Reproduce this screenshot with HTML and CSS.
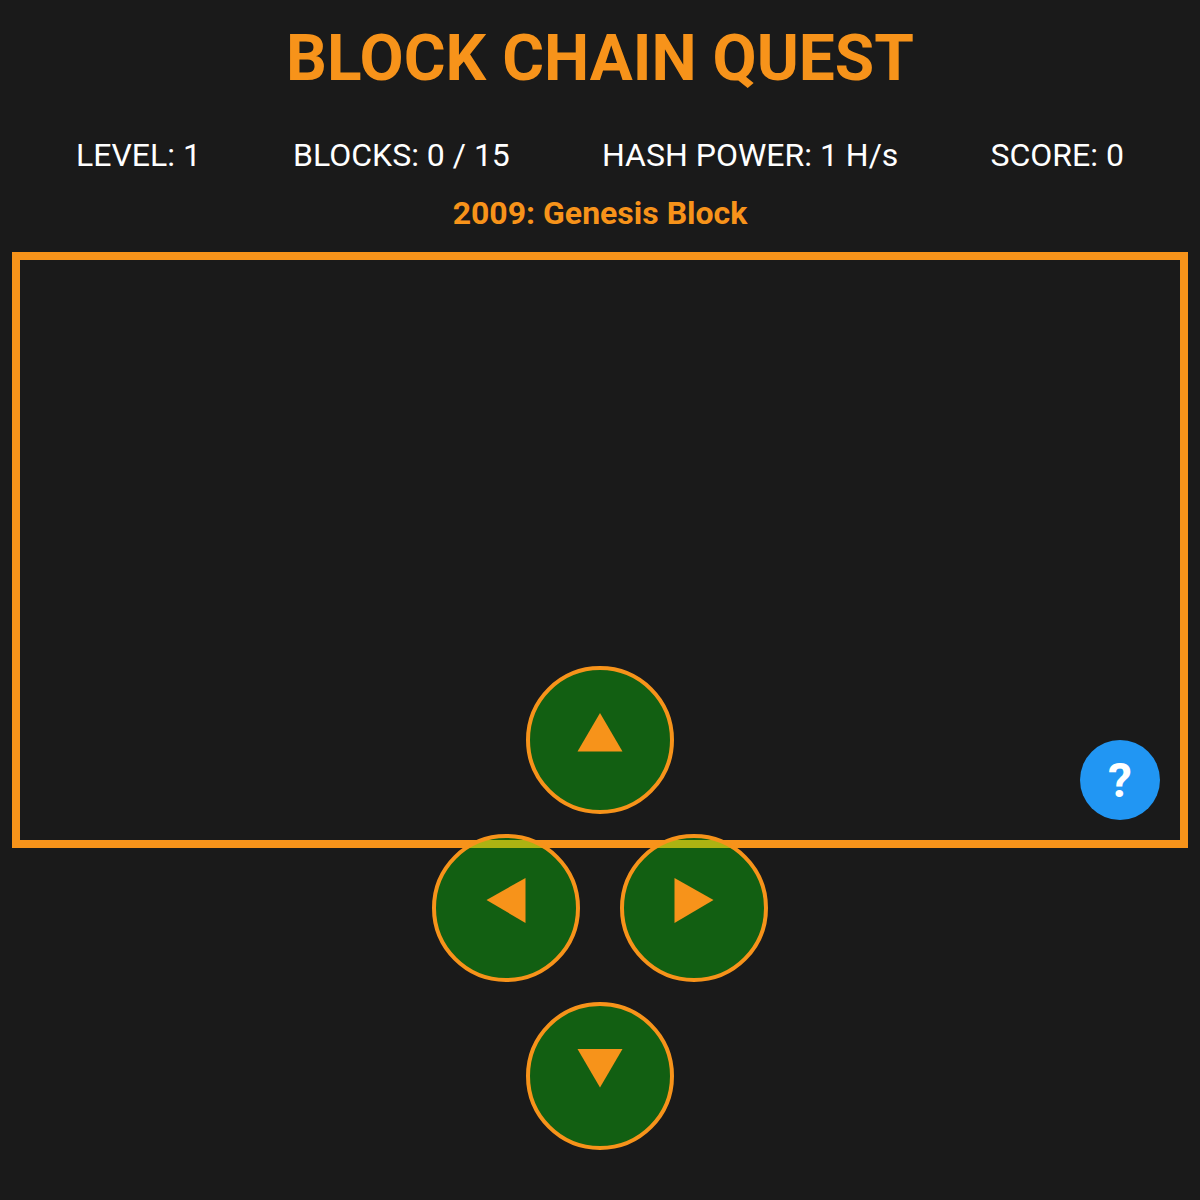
FILE: index.html
```html
<!DOCTYPE html>
<html>
<head>
    <title>Block Chain Quest</title>
    <link rel="stylesheet" href="styles.css">
</head>
<body>
    <h1>BLOCK CHAIN QUEST</h1>

    <div class="stats">
        <div>LEVEL: 1</div>
        <div>BLOCKS: 0 / 15</div>
        <div>HASH POWER: 1 H/s</div>
        <div>SCORE: 0</div>
    </div>

    <div class="era">2009: Genesis Block</div>

    <div class="board"></div>

    <button class="help-btn">?</button>

    <!-- Touch controls sit over the board -->
    <div class="controls">
        <button class="pad-btn">
            <svg class="arrow" viewBox="0 0 148 148"><polygon points="74,47 51.5,85.5 96.5,85.5" /></svg>
        </button>
        <div class="controls-row">
            <button class="pad-btn">
                <svg class="arrow" viewBox="0 0 148 148"><polygon points="54.5,66 93.5,44 93.5,89" /></svg>
            </button>
            <button class="pad-btn">
                <svg class="arrow" viewBox="0 0 148 148"><polygon points="93.5,66 54.5,44 54.5,89" /></svg>
            </button>
        </div>
        <button class="pad-btn">
            <svg class="arrow" viewBox="0 0 148 148"><polygon points="74,85.5 51.5,47 96.5,47" /></svg>
        </button>
    </div>
</body>
</html>
```

FILE: styles.css
```css
* {
    box-sizing: border-box;
}

body {
    font-family: Roboto, sans-serif;
    background: #1a1a1a;
    color: white;
    margin: 0;
    padding: 0 12px;
    height: 1200px;
    overflow: hidden;
}

h1 {
    margin: 0;
    padding-top: 21px;
    height: 127px;
    font-size: 64px;
    line-height: 75px;
    font-weight: 700;
    text-align: center;
    color: #f7931a;
}

.stats {
    display: flex;
    justify-content: space-around;
    padding: 0 18px;
    height: 56px;
    font-size: 32px;
    line-height: 56px;
}

.era {
    height: 69px;
    padding-top: 2px;
    font-size: 32px;
    line-height: 56px;
    font-weight: 700;
    text-align: center;
    color: #f7931a;
}

.board {
    height: 596px;
    border: 8px solid #f7931a;
}

button {
    font-family: inherit;
    padding: 0;
    cursor: pointer;
}

.help-btn {
    position: absolute;
    left: 1080px;
    top: 740px;
    width: 80px;
    height: 80px;
    border: none;
    border-radius: 50%;
    background: #2196f3;
    color: white;
    font-size: 48px;
    font-weight: 700;
}

.controls {
    position: absolute;
    left: 0;
    right: 0;
    top: 666px;
    display: flex;
    flex-direction: column;
    align-items: center;
    gap: 20px;
}

.controls-row {
    display: flex;
    gap: 40px;
}

.pad-btn {
    display: block;
    width: 148px;
    height: 148px;
    border: 4px solid #f7931a;
    border-radius: 50%;
    background: rgba(0, 255, 0, 0.3);
}

.arrow {
    display: block;
    width: 148px;
    height: 148px;
    margin: -4px;
    fill: #f7931a;
}
```
